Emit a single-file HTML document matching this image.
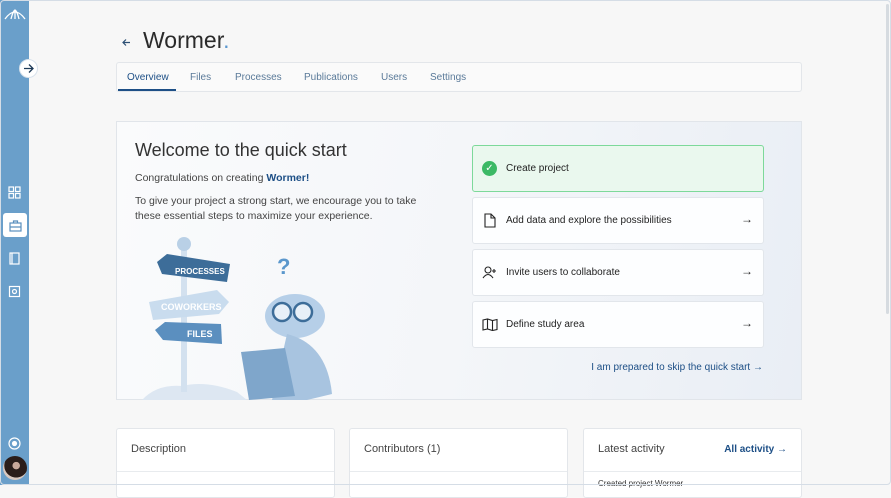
<!DOCTYPE html>
<html><head><meta charset="utf-8"><style>
*{box-sizing:border-box;margin:0;padding:0}
body{width:891px;height:485px;overflow:hidden;background:#f7f7f7;font-family:"Liberation Sans",sans-serif;position:relative;color:#222}
.frame{position:absolute;inset:0;border:1px solid #d5dde6;border-radius:4px;pointer-events:none}
.side{position:absolute;left:0;top:0;width:29px;height:485px;background:#6a9fca}
.ic{position:absolute;left:8px;width:13px;height:13px}
.tabs{position:absolute;left:116px;top:62px;width:686px;height:30px;background:#fafafa;border:1px solid #e3e6ea;border-radius:3px;font-size:10px;color:#5a7a99}
.tabs span{position:absolute;top:9px}
.qs{position:absolute;left:116px;top:121px;width:686px;height:279px;border:1px solid #e1e5ea;background:linear-gradient(100deg,#fafbfc 0%,#f4f6f9 50%,#e9eef5 100%)}
.step{position:absolute;left:355px;width:292px;height:47px;background:#fdfeff;border:1px solid #e2e6eb;border-radius:3px;font-size:10px;color:#222}
.step .t{position:absolute;left:33px;top:17px}
.step .a{position:absolute;right:10px;top:14px;font-size:12px}
.card{position:absolute;top:428px;width:219px;height:70px;background:#fff;border:1px solid #e3e6ea;border-radius:3px}
.card .h{position:absolute;left:14px;top:14px;font-size:11px;color:#444}
.card .l{position:absolute;left:0;right:0;top:42px;border-top:1px solid #e8ebee}
</style></head><body>
<div class="side">
 <svg style="position:absolute;left:4px;top:9px" width="22" height="12" viewBox="0 0 22 12" fill="none" stroke="#fff" stroke-width="1.3"><path d="M1 10 Q11 -4 21 10"/><path d="M7 10 Q9 2 11 1 Q13 2 15 10"/><path d="M11 1 V10"/></svg>
 <svg class="ic" style="top:186px" viewBox="0 0 13 13" fill="none" stroke="#fff" stroke-width="1.2"><rect x="1" y="1" width="4.5" height="4.5"/><rect x="7.5" y="1" width="4.5" height="4.5"/><rect x="1" y="7.5" width="4.5" height="4.5"/><rect x="7.5" y="7.5" width="4.5" height="4.5"/></svg>
 <div style="position:absolute;left:3px;top:213px;width:24px;height:24px;background:#fff;border-radius:3px"></div>
 <svg class="ic" style="top:219px;left:9px" viewBox="0 0 13 13" fill="none" stroke="#5a8fbd" stroke-width="1.2"><rect x="1" y="4" width="11" height="8"/><path d="M4.5 4V2h4v2M1 8h11"/></svg>
 <svg class="ic" style="top:252px" viewBox="0 0 13 13" fill="none" stroke="#fff" stroke-width="1.2"><rect x="2" y="1" width="9" height="11"/><path d="M4 1v11"/></svg>
 <svg class="ic" style="top:285px" viewBox="0 0 13 13" fill="none" stroke="#fff" stroke-width="1.2"><rect x="1.5" y="1.5" width="10" height="10"/><circle cx="6.5" cy="6.5" r="2"/></svg>
 <svg class="ic" style="top:437px" viewBox="0 0 13 13" fill="none" stroke="#fff" stroke-width="1.2"><circle cx="6.5" cy="6.5" r="5.5"/><circle cx="6.5" cy="6.5" r="2" fill="#fff"/></svg>
 <div style="position:absolute;left:3px;top:456px;width:24px;height:24px;border-radius:50%;background:radial-gradient(circle at 55% 40%,#c9a89a 0 18%,#2a1d1a 20% 60%,#d8c8c0 62%)"></div>
</div>
<div style="position:absolute;left:19px;top:59px;width:19px;height:19px;border-radius:50%;background:#fff;border:1px solid #d8e2ec"><svg style="position:absolute;left:3px;top:3px" width="11" height="11" viewBox="0 0 11 11" fill="none" stroke="#1d3a58" stroke-width="1.3"><path d="M1 5.5h9M6 1.5l4 4-4 4"/></svg></div>
<svg style="position:absolute;left:122px;top:38px" width="9" height="9" viewBox="0 0 9 9" fill="none" stroke="#2c4f74" stroke-width="1.2"><path d="M8 4.5H1M4 1.5l-3 3 3 3"/></svg>
<div style="position:absolute;left:143px;top:27px;font-size:23px;color:#2a2a2a">Wormer<span style="color:#5a97d0">.</span></div>
<div class="tabs">
 <span style="left:10px;color:#1d4f86">Overview</span><div style="position:absolute;left:1px;top:26px;width:58px;height:2px;background:#1d4f86"></div>
 <span style="left:73px">Files</span><span style="left:118px">Processes</span><span style="left:187px">Publications</span><span style="left:264px">Users</span><span style="left:313px">Settings</span>
</div>
<div class="qs">
 <div style="position:absolute;left:18px;top:18px;font-size:18px;color:#333">Welcome to the quick start</div>
 <div style="position:absolute;left:18px;top:50px;font-size:10.5px;color:#444">Congratulations on creating <b style="color:#1d4f86">Wormer!</b></div>
 <div style="position:absolute;left:18px;top:72px;font-size:10.5px;line-height:15px;color:#444;width:290px">To give your project a strong start, we encourage you to take these essential steps to maximize your experience.</div>
 <svg style="position:absolute;left:20px;top:112px" width="200" height="166" viewBox="0 0 200 166">
  <path d="M5 166 Q20 150 45 152 Q70 146 100 158 L110 166Z" fill="#dde7f2"/>
  <rect x="44" y="8" width="6" height="150" fill="#d3e1ef"/>
  <circle cx="47" cy="10" r="7" fill="#b9d0e6"/>
  <path d="M20 28 L30 20 L93 30 L90 48 L25 40Z" fill="#3d6d99"/>
  <text x="38" y="40" font-size="8" fill="#fff" font-weight="bold" font-family="Liberation Sans">PROCESSES</text>
  <path d="M12 68 L80 56 L92 68 L82 80 L16 86Z" fill="#c9dcee"/>
  <text x="24" y="76" font-size="9" fill="#fff" font-weight="bold" font-family="Liberation Sans">COWORKERS</text>
  <path d="M18 96 L28 88 L84 90 L85 110 L26 106Z" fill="#5b8fbf"/>
  <text x="50" y="103" font-size="9" fill="#fff" font-weight="bold" font-family="Liberation Sans">FILES</text>
  <text x="140" y="40" font-size="22" fill="#5b97cc" font-weight="bold" font-family="Liberation Sans">?</text>
  <ellipse cx="158" cy="82" rx="30" ry="22" fill="#b6cfe8"/>
  <circle cx="145" cy="78" r="9" fill="#e8f0f8" stroke="#3d6d99" stroke-width="2.5"/>
  <circle cx="166" cy="78" r="9" fill="#e8f0f8" stroke="#3d6d99" stroke-width="2.5"/>
  <path d="M150 100 Q190 110 195 160 L170 166 L135 166Z" fill="#a8c4e0"/>
  <path d="M104 118 L148 114 L158 162 L112 166Z" fill="#7fa6cb"/>
 </svg>
 <div class="step" style="top:23px;background:#eaf8ee;border-color:#7dd99a"><div style="position:absolute;left:9px;top:15px;width:15px;height:15px;border-radius:50%;background:#3cb965;color:#fff;font-size:10px;text-align:center;line-height:15px">✓</div><span class="t">Create project</span></div>
 <div class="step" style="top:75px"><svg style="position:absolute;left:11px;top:15px" width="12" height="15" viewBox="0 0 12 15" fill="none" stroke="#222" stroke-width="1.1"><path d="M1 1h6l4 4v9H1z M7 1v4h4"/></svg><span class="t">Add data and explore the possibilities</span><span class="a">→</span></div>
 <div class="step" style="top:127px"><svg style="position:absolute;left:9px;top:16px" width="16" height="13" viewBox="0 0 16 13" fill="none" stroke="#222" stroke-width="1.1"><circle cx="6" cy="4" r="3"/><path d="M1 12q5-7 10 0M12 3v4M10 5h4"/></svg><span class="t">Invite users to collaborate</span><span class="a">→</span></div>
 <div class="step" style="top:179px"><svg style="position:absolute;left:9px;top:16px" width="16" height="13" viewBox="0 0 16 13" fill="none" stroke="#222" stroke-width="1.1"><path d="M1 2l4.5-1 5 1.5 4.5-1v10l-4.5 1-5-1.5-4.5 1z M5.5 1v10 M10.5 2.5v10"/></svg><span class="t">Define study area</span><span class="a">→</span></div>
 <div style="position:absolute;right:38px;top:240px;font-size:10px;color:#1d4f86">I am prepared to skip the quick start →</div>
</div>
<div class="card" style="left:116px"><span class="h">Description</span><div class="l"></div></div>
<div class="card" style="left:349px"><span class="h">Contributors (1)</span><div class="l"></div></div>
<div class="card" style="left:583px"><span class="h">Latest activity</span><span style="position:absolute;right:14px;top:15px;font-size:10px;color:#1d4f86;font-weight:bold">All activity →</span><div class="l"></div><span style="position:absolute;left:14px;top:50px;font-size:8px;color:#333">Created project Wormer</span></div>
<div style="position:absolute;left:886px;top:4px;width:3px;height:310px;background:#d6dbe0;border-radius:2px"></div>
<div class="frame"></div>
</body></html>
